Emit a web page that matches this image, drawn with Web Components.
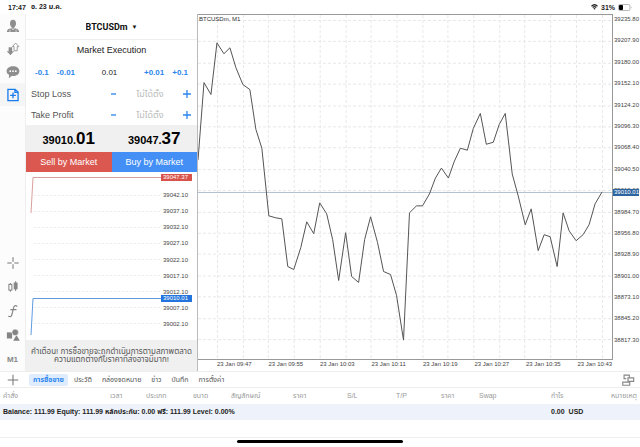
<!DOCTYPE html>
<html lang="th">
<head>
<meta charset="utf-8">
<meta name="viewport" content="width=device-width, initial-scale=1">
<title>BTCUSDm, M1</title>
<style>
  body {
    margin: 0;
    background: #fff;
    color: #222;
    font-family: "Liberation Sans", "Noto Sans Thai", "Loma", sans-serif;
  }
</style>
</head>
<body>
<trade-app></trade-app>

<script>
// Shared by every element: small reset for the controls
const RESET = `
  *, :host { box-sizing: border-box; }
  h2, p, button, input, select { margin: 0; padding: 0; }
  button, input, select {
    font: inherit;
    color: inherit;
    background: none;
    border: 0;
    border-radius: 0;
    appearance: none;
  }
  button, select { cursor: pointer; }
  svg { display: block; }
`;

class BaseElement extends HTMLElement {
  constructor() {
    super();
    this.attachShadow({ mode: 'open' });
  }

  render(css, html) {
    const template = document.createElement('template');
    template.innerHTML = `<style>${RESET}${css}</style>${html}`;
    this.shadowRoot.replaceChildren(template.content.cloneNode(true));
  }
}

// Clock on the left, wifi and battery on the right
class StatusBar extends BaseElement {
  connectedCallback() {
    this.render(`
      :host {
        display: flex;
        align-items: center;
        justify-content: space-between;
        height: 14px;
        padding: 0 8px;
        font-size: 7px;
        font-weight: bold;
      }
      div { display: flex; align-items: center; }
      .left { gap: 5px; }
      .right { gap: 3px; }
    `, `
      <div class="left"><span>17:47</span><span>อ. 23 ม.ค.</span></div>
      <div class="right">
        <svg width="7" height="6" viewBox="0 0 14 12" fill="none" stroke="#222" stroke-width="2.4">
          <path d="M1 4.500C4.500 1 9.500 1 13 4.500M3.500 7.200C5.500 5.200 8.500 5.200 10.500 7.200"/>
          <path d="M7 11.500 4.800 9Q7 7.200 9.200 9Z" fill="#222" stroke="none"/>
        </svg>
        <span>31%</span>
        <svg width="14" height="7" viewBox="0 0 14 7">
          <rect x=".5" y=".5" width="11.500" height="6" rx="1.500" fill="#fff" stroke="#999" stroke-width=".7"/>
          <rect x="1" y="1" width="4" height="5" rx="1" fill="#000"/>
          <path d="M13 2.500q1 1 0 2z" fill="#999"/>
        </svg>
      </div>
    `);
  }
}
customElements.define('status-bar', StatusBar);

const ICONS = {
  account: `<g fill="#8e8e8e"><ellipse cx="8" cy="5" rx="3.400" ry="4.200"/><path d="M6.500 8h3v3h-3z"/><path d="M1 14.800q0-3.800 5-4.300l2 2 2-2q5 .5 5 4.300z"/></g><path d="M4.500 12v3M11.500 12v3" stroke="#fff" stroke-width=".7"/>`,
  quotes: `<path d="M5 15 .8 10.500H3V6h4v4.500h2.200z" fill="#8e8e8e"/><path d="M11 1.200 7.300 5.200h1.900V10h3.600V5.200h1.900z" fill="#fff" stroke="#8e8e8e"/>`,
  chat: `<path d="M8 1.500c4 0 7.300 2.300 7.300 5.500s-3.300 5.500-7.300 5.500l-1.200-.1L3.200 15l.4-3.600C1.800 10.300.7 8.800.7 7c0-3.200 3.300-5.500 7.300-5.500z" fill="#8e8e8e"/><g fill="#fff"><circle cx="4.800" cy="7" r="1"/><circle cx="8" cy="7" r="1"/><circle cx="11.200" cy="7" r="1"/></g>`,
  order: `<path d="M2.200 1.500h8.300l3.300 3.200v9.800H2.200zM10.200 1.500V5h3.600M8 5.200v6.600M4.700 8.500h6.600" fill="none" stroke="#1a7cec" stroke-width="1.500"/>`,
  cross: `<path d="M8 1.500v5M8 9.500v5M1.500 8h5M9.500 8h5" fill="none" stroke="#777" stroke-width="1.200"/>`,
  candles: `<g stroke="#858585" stroke-width="1.200"><path d="M5 3.500v10M11 1.500v11"/><rect x="3.300" y="5" width="3.400" height="6.500" fill="#fff"/><rect x="9.400" y="3.500" width="3.200" height="6.500" fill="#858585"/></g>`,
  func: `<path d="M12.500 2.500C10.500 1 9.200 2.200 8.700 4.200L6.800 12C6.200 14.500 4.800 15 3 14M5.500 6.500h6" fill="none" stroke="#858585" stroke-width="1.300" stroke-linecap="round"/>`,
  shapes: `<g fill="#858585"><rect x="1" y="5" width="6" height="7"/><path d="M12 8 15.800 14.500H8.200z"/></g><circle cx="10.500" cy="5" r="3.800" fill="#858585" stroke="#fff" stroke-width=".8"/>`,
  plus: `<path d="M8 2v12M2 8h12" stroke="#777" stroke-width="1.200"/>`,
  layout: `<g fill="none" stroke="#888" stroke-width="1.300"><path d="M6 6.500H3.500v-4h6V5M8 5.500h6.500v4H8zM2 10.500h8v3.500H2z"/></g>`,
};

class AppIcon extends BaseElement {
  connectedCallback() {
    const name = this.getAttribute('name');
    this.render(`
      :host { display: block; width: 14px; height: 14px; }
      svg { width: 100%; height: 100%; }
    `, `<svg viewBox="0 0 16 16">${ICONS[name]}</svg>`);
  }
}
customElements.define('app-icon', AppIcon);

// Narrow rail of icons at the left edge
class ToolRail extends BaseElement {
  connectedCallback() {
    const item = (name, label, cls = '') =>
      `<button class="${cls}" aria-label="${label}"><app-icon name="${name}"></app-icon></button>`;

    this.render(`
      :host {
        display: flex;
        flex-direction: column;
        justify-content: space-between;
        background: #fcfcfc;
        border-right: 1px solid #eee;
      }
      button {
        display: grid;
        place-items: center;
        width: 100%;
        height: 24px;
        color: #888;
        font-size: 8px;
        font-weight: bold;
      }
      .top button { height: 23px; }
      .active { background: #f5f5f5; }
    `, `
      <div class="top">
        ${item('account', 'Accounts')}
        ${item('quotes', 'Quotes')}
        ${item('chat', 'Messages')}
        ${item('order', 'New order', 'active')}
      </div>
      <div>
        ${item('cross', 'Crosshair')}
        ${item('candles', 'Chart type')}
        ${item('func', 'Indicators')}
        ${item('shapes', 'Objects')}
        <button>M1</button>
      </div>
    `);
  }
}
customElements.define('tool-rail', ToolRail);

// Label with a minus / value / plus stepper
class PriceStepper extends BaseElement {
  connectedCallback() {
    this.render(`
      :host {
        display: flex;
        align-items: center;
        height: 21px;
        padding: 0 5px;
        font-size: 9px;
      }
      label { flex: 1; color: #555; }
      button {
        display: grid;
        place-items: center;
        width: 10px;
        height: 16px;
      }
      path { stroke: #2b86ee; stroke-width: 1.300; }
      input {
        width: 64px;
        text-align: center;
        outline: 0;
      }
      input::placeholder { color: #bbb; }
    `, `
      <label for="value"><slot></slot></label>
      <button aria-label="ลด"><svg width="8" height="8"><path d="M2 4h5"/></svg></button>
      <input id="value" placeholder="ไม่ได้ตั้ง">
      <button aria-label="เพิ่ม"><svg width="8" height="8"><path d="M0 4h8M4 0v8"/></svg></button>
    `);
  }
}
customElements.define('price-stepper', PriceStepper);

class PriceQuote extends BaseElement {
  connectedCallback() {
    const [whole, cents] = this.getAttribute('value').split('.');
    this.render(`
      :host {
        display: flex;
        align-items: baseline;
        justify-content: center;
        color: #000;
        font-size: 11px;
        font-weight: bold;
        line-height: 27px;
      }
      b { font-size: 17px; }
    `, `<span>${whole}.</span><b>${cents}</b>`);
  }
}
customElements.define('price-quote', PriceQuote);

// Bid and ask ticks with their own small scale
class TickChart extends BaseElement {
  connectedCallback() {
    const prices = [42, 37, 32, 27, 22, 17, 12, 7, 2].map(n => (39000.1 + n).toFixed(2));
    const grid = prices.map((p, i) => `<path class="grid" d="M8 ${23.5 + i * 16}H135"/>`).join('');

    this.render(`
      :host {
        position: relative;
        display: grid;
        grid-template-columns: 1fr 36px;
        font-size: 6px;
      }
      .plot { contain: size; }
      svg { width: 100%; height: 100%; }
      path { fill: none; stroke-width: 1; vector-effect: non-scaling-stroke; }
      .grid { stroke: #ececec; stroke-dasharray: 2 2; }
      path.ask { stroke: #d8a09d; }
      path.bid { stroke: #5f9be0; }
      .scale {
        display: flex;
        flex-direction: column;
        justify-content: space-between;
        padding: 19px 0 12px 2px;
        line-height: 8px;
        color: #444;
      }
      .tag {
        position: absolute;
        right: 5px;
        width: 31px;
        padding-left: 2px;
        line-height: 7px;
        color: #fff;
      }
      .tag.ask { top: 2px; background: #d9534a; }
      .tag.bid { bottom: 38px; background: #2374dc; }
    `, `
      <div class="plot">
        <svg viewBox="0 0 135 168" preserveAspectRatio="none">
          ${grid}
          <path class="ask" d="M5 41 7 5.500H135"/>
          <path class="bid" d="M5 163 7 126.500H135"/>
        </svg>
      </div>
      <div class="scale">${prices.map(p => `<span>${p}</span>`).join('')}</div>
      <span class="tag ask">39047.37</span>
      <span class="tag bid">39010.01</span>
    `);
  }
}
customElements.define('tick-chart', TickChart);

class OrderPanel extends BaseElement {
  connectedCallback() {
    this.render(`
      :host {
        display: flex;
        flex-direction: column;
        font-size: 9px;
      }
      .symbol {
        display: flex;
        align-items: center;
        justify-content: center;
        gap: 3px;
        height: 26px;
        border-bottom: 1px solid #eee;
        color: #111;
        font-family: Roboto, "Liberation Sans", sans-serif;
        font-weight: bold;
      }
      .caret { font-size: 6px; }
      h2 {
        height: 21px;
        font-size: 9px;
        font-weight: normal;
        line-height: 21px;
        text-align: center;
      }
      .volume {
        display: flex;
        align-items: center;
        gap: 8px;
        height: 22px;
        padding: 0 9px;
        font-size: 8px;
      }
      .volume button { color: #2b86ee; font-weight: bold; }
      .volume input { flex: 1; min-width: 0; text-align: center; outline: 0; }
      .quotes, .deal { display: grid; grid-template-columns: 1fr 1fr; }
      .quotes { height: 27px; background: #f0f0f0; }
      .deal button { height: 20px; color: #fff; }
      .sell { background: #db5850; }
      .buy { background: #438ff5; }
      tick-chart { flex: 1; min-height: 0; }
      .note {
        display: grid;
        place-items: center;
        align-content: center;
        height: 31px;
        background: #f0f0f0;
        color: #555;
        font-size: 8px;
        line-height: 8px;
        text-align: center;
        white-space: nowrap;
      }
    `, `
      <div class="symbol">
        <select aria-label="Symbol"><option>BTCUSDm</option></select><span class="caret">▼</span>
      </div>
      <h2>Market Execution</h2>
      <div class="volume">
        <button>-0.1</button><button>-0.01</button>
        <input aria-label="Volume" value="0.01">
        <button>+0.01</button><button>+0.1</button>
      </div>
      <price-stepper>Stop Loss</price-stepper>
      <price-stepper>Take Profit</price-stepper>
      <div class="quotes">
        <price-quote value="39010.01"></price-quote>
        <price-quote value="39047.37"></price-quote>
      </div>
      <div class="deal">
        <button class="sell">Sell by Market</button>
        <button class="buy">Buy by Market</button>
      </div>
      <tick-chart></tick-chart>
      <p class="note"><span>คำเตือน! การซื้อขายจะถูกดำเนินการตามสภาพตลาด</span><span>ความแตกต่างกับราคาที่ส่งอาจมีมาก!</span></p>
    `);
  }
}
customElements.define('order-panel', OrderPanel);

// One close per minute, as [x, y] inside the 415 x 346 plot
const CLOSES = [
  [0, 146], [6, 68], [13, 80], [19, 28], [26, 39], [32, 33], [38, 53], [45, 70], [52, 75],
  [58, 115], [64, 134], [71, 202], [78, 204], [84, 205], [90, 253], [96, 256], [103, 234],
  [109, 208], [116, 220], [122, 189], [129, 200], [135, 226], [141, 267], [148, 219],
  [154, 263], [161, 269], [167, 226], [173, 203], [180, 229], [186, 258], [193, 261],
  [199, 282], [206, 327], [212, 199], [219, 192], [225, 192], [232, 180], [238, 164],
  [244, 154], [251, 164], [257, 147], [263, 134], [270, 136], [276, 114], [283, 99],
  [289, 130], [296, 128], [302, 110], [308, 99], [315, 160], [321, 182], [328, 211],
  [334, 195], [341, 237], [347, 221], [353, 223], [360, 253], [366, 199], [372, 217],
  [379, 227], [386, 221], [392, 211], [398, 190], [405, 178],
];

class PriceChart extends BaseElement {
  connectedCallback() {
    const prices = Array.from({ length: 16 }, (_, i) => (39235.8 - i * 27.9).toFixed(2));
    const times = ['09:47', '09:55', '10:03', '10:11', '10:19', '10:27', '10:35', '10:43'];
    let grid = '';
    for (let i = 0; i < 16; i++) {
      grid += `M0 ${Math.round(5 + i * 21.4) + 0.5}H415`;
      grid += `M${Math.round(19 + i * 25.7) + 0.5} 0V346`;
    }

    this.render(`
      :host {
        display: grid;
        grid-template: 1fr 11px / 1fr 27px;
        font-size: 6px;
        color: #444;
      }
      .plot {
        position: relative;
        contain: size;
        border: solid #999;
        border-width: 1px 1px 1px 0;
      }
      svg { width: 100%; height: 100%; }
      path, polyline { fill: none; vector-effect: non-scaling-stroke; }
      .grid { stroke: #e8e8e8; stroke-dasharray: 3 2; }
      .line { stroke: #555; }
      .last { stroke: #b0bfce; }
      .name {
        position: absolute;
        top: 0;
        left: 1px;
        line-height: 8px;
        color: #333;
      }
      .prices {
        position: relative;
        display: flex;
        flex-direction: column;
        justify-content: space-between;
        padding: 1px 0 16px 1px;
        line-height: 8px;
      }
      .tag {
        position: absolute;
        top: 175px;
        right: 1px;
        left: 0;
        padding-left: 1px;
        line-height: 7px;
        background: #2c64a0;
        color: #fff;
      }
      .times {
        grid-column: 1 / -1;
        display: grid;
        grid-template-columns: repeat(8, 1fr);
        padding: 0 11px 0 19px;
        line-height: 9px;
        white-space: nowrap;
      }
    `, `
      <div class="plot">
        <svg viewBox="0 0 415 346" preserveAspectRatio="none">
          <path class="grid" d="${grid}"/>
          <path class="last" d="M0 178.500H415"/>
          <polyline class="line" points="${CLOSES.join(' ')}"/>
        </svg>
        <span class="name">BTCUSDm, M1</span>
      </div>
      <div class="prices">
        ${prices.map(p => `<span>${p}</span>`).join('')}
        <span class="tag">39010.01</span>
      </div>
      <div class="times">${times.map(t => `<span>23 Jan ${t}</span>`).join('')}</div>
    `);
  }
}
customElements.define('price-chart', PriceChart);

class BottomTabs extends BaseElement {
  connectedCallback() {
    const tabs = ['การซื้อขาย', 'ประวัติ', 'กล่องจดหมาย', 'ข่าว', 'บันทึก', 'การตั้งค่า'];
    this.render(`
      :host {
        display: flex;
        align-items: center;
        height: 17px;
        padding: 0 5px 0 6px;
        border-top: 1px solid #eee;
        border-bottom: 1px solid #eee;
        color: #555;
        font-size: 7px;
      }
      nav { display: flex; flex: 1; gap: 2px; margin-left: 9px; }
      nav button { padding: 0 4px; line-height: 12px; }
      .active {
        border-radius: 2px;
        background: #deecfd;
        color: #2b86ee;
        font-weight: bold;
      }
    `, `
      <button aria-label="เพิ่ม"><app-icon name="plus"></app-icon></button>
      <nav>${tabs.map((t, i) => `<button class="${i ? '' : 'active'}">${t}</button>`).join('')}</nav>
      <button aria-label="Layout"><app-icon name="layout"></app-icon></button>
    `);
  }
}
customElements.define('bottom-tabs', BottomTabs);

class PositionsTable extends BaseElement {
  connectedCallback() {
    const columns = [
      ['คำสั่ง', 107], ['เวลา', 36], ['ประเภท', 47], ['ขนาด', 38], ['สัญลักษณ์', 62], ['ราคา', 54],
      ['S/L', 49], ['T/P', 45], ['ราคา', 38], ['Swap', 72], ['กำไร', 50], ['หมายเหตุ', 42],
    ];
    this.render(`
      :host { display: block; font-size: 7px; }
      table { width: 100%; border-collapse: collapse; table-layout: fixed; }
      th, td {
        height: 16px;
        padding: 0 0 0 3px;
        line-height: 12px;
        text-align: left;
        white-space: nowrap;
      }
      th { color: #999; font-weight: normal; }
      th:last-child { padding: 0 3px 0 0; text-align: right; }
      td { background: #eef2fa; font-weight: bold; }
      td span { margin-left: 2px; }
    `, `
      <table>
        <colgroup>${columns.map(c => `<col style="width: ${c[1]}px">`).join('')}</colgroup>
        <thead><tr>${columns.map(c => `<th>${c[0]}</th>`).join('')}</tr></thead>
        <tbody>
          <tr>
            <td colspan="10">Balance: 111.99 Equity: 111.99 หลักประกัน: 0.00 ฟรี: 111.99 Level: 0.00%</td>
            <td colspan="2">0.00 <span>USD</span></td>
          </tr>
        </tbody>
      </table>
    `);
  }
}
customElements.define('positions-table', PositionsTable);

class TradeApp extends BaseElement {
  connectedCallback() {
    this.render(`
      :host {
        display: flex;
        flex-direction: column;
        min-height: 100vh;
      }
      main {
        flex: 1;
        display: grid;
        grid-template-columns: 26px 171px 1fr;
      }
      price-chart { border-left: 1px solid #bbb; }
      footer {
        display: grid;
        justify-items: center;
        height: 10px;
        margin-top: 17px;
        padding-top: 2px;
        border-top: 1px solid #eee;
      }
      .home { width: 26%; height: 3px; border-radius: 2px; background: #000; }
    `, `
      <status-bar></status-bar>
      <main>
        <tool-rail></tool-rail>
        <order-panel></order-panel>
        <price-chart></price-chart>
      </main>
      <bottom-tabs></bottom-tabs>
      <positions-table></positions-table>
      <footer><div class="home"></div></footer>
    `);
  }
}
customElements.define('trade-app', TradeApp);
</script>
</body>
</html>
